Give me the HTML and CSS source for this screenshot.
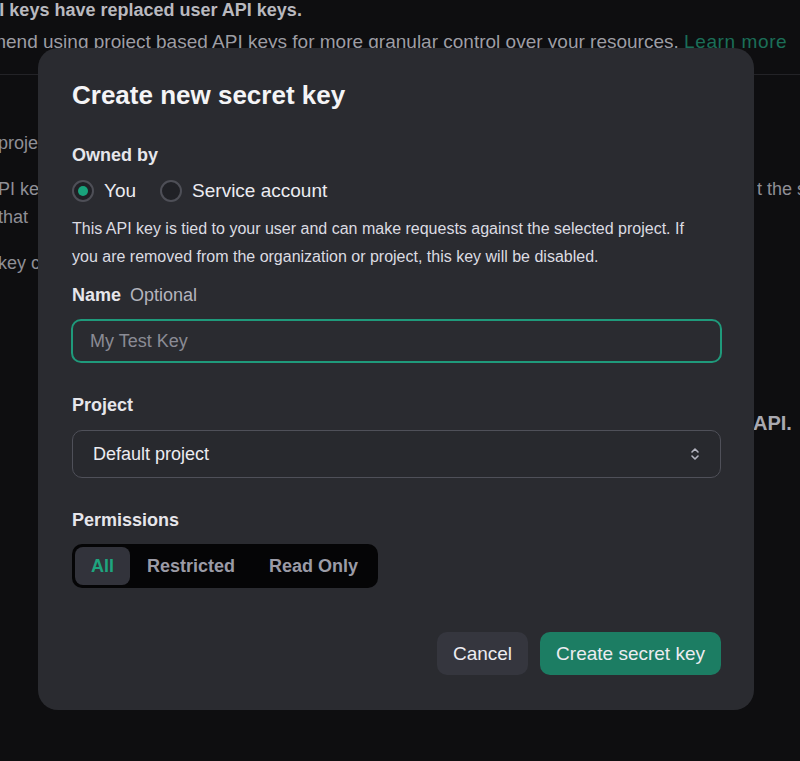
FILE: index.html
```html
<!DOCTYPE html>
<html lang="en">
<head>
    <meta charset="UTF-8">
    <meta name="viewport" content="width=device-width, initial-scale=1.0">
    <title>API keys</title>
    <link rel="stylesheet" href="styles.css">
</head>
<body>
    <div class="page">
        <div class="notice">
            <p class="notice-title">Project API keys have replaced user API keys.</p>
            <p class="notice-text">We recommend using project based API keys for more granular control over your resources. <a href="#">Learn more</a></p>
        </div>
        <hr class="rule">

        <div class="page-body">
            <div class="bg-row first">
                <span>project, you can view and manage all API keys in this project.</span>
                <span></span>
            </div>
            <div class="bg-row para">
                <span>PI key with others, or expose it in the browser or other client-side code. In order to protec</span>
                <span>t the security of your account</span>
            </div>
            <div class="bg-row">
                <span>that</span>
                <span></span>
            </div>
            <div class="bg-row para">
                <span>key can be viewed on the usage page.</span>
                <span></span>
            </div>
            <div class="bg-row heading">
                <span></span>
                <span class="api">API.</span>
            </div>
        </div>
    </div>

    <div class="modal">
        <h1 class="modal-title">Create new secret key</h1>

        <div class="field">
            <div class="label">Owned by</div>
            <div class="radios">
                <label class="radio checked"><span class="dot"></span>You</label>
                <label class="radio"><span class="dot"></span>Service account</label>
            </div>
            <p class="hint">This API key is tied to your user and can make requests against the selected project. If you are removed from the organization or project, this key will be disabled.</p>
        </div>

        <div class="field">
            <div class="label">Name <span class="optional">Optional</span></div>
            <input class="text-input" type="text" placeholder="My Test Key">
        </div>

        <div class="field spaced">
            <div class="label">Project</div>
            <div class="select">
                <span>Default project</span>
                <svg width="10" height="16" viewBox="0 0 10 16" fill="none" stroke="#b4b4c0" stroke-width="1.6" stroke-linecap="round" stroke-linejoin="round">
                    <path d="M2 6 L5 3 L8 6"/>
                    <path d="M2 10 L5 13 L8 10"/>
                </svg>
            </div>
        </div>

        <div class="field spaced">
            <div class="label">Permissions</div>
            <div class="segmented">
                <span class="seg active">All</span>
                <span class="seg">Restricted</span>
                <span class="seg">Read Only</span>
            </div>
        </div>

        <div class="actions">
            <button class="btn btn-cancel">Cancel</button>
            <button class="btn btn-primary">Create secret key</button>
        </div>
    </div>
</body>
</html>
```

FILE: styles.css
```css
html, body {
    margin: 0;
    height: 100%;
}

body {
    background: #0e0e10;
    font-family: "Liberation Sans", Arial, sans-serif;
    color: #ececf1;
    overflow: hidden;
}

.page {
    width: 800px;
}

.notice {
    margin-top: -2px;
    white-space: nowrap;
}

.notice p {
    margin: 0;
    line-height: 24px;
}

.notice-title {
    margin-left: -91px !important;
    font-size: 18px;
    font-weight: bold;
    color: #b9b9bf;
}

.notice-text {
    margin: 8px 0 0 -96px !important;
    font-size: 19px;
    color: #9d9da4;
}

.notice-text a {
    color: #1b6e58;
    letter-spacing: 0.6px;
    text-decoration: none;
}

.rule {
    border: none;
    border-top: 1px solid #232327;
    margin: 20px 0 0;
}

.page-body {
    margin-top: 54px;
    font-size: 18px;
    line-height: 28px;
    color: #8f8f96;
}

.bg-row {
    display: grid;
    grid-template-columns: 757px 1fr;
}

.bg-row span {
    white-space: nowrap;
    overflow: hidden;
}

.bg-row span:first-child {
    margin-left: -2px;
}

.bg-row.para {
    margin-top: 18px;
}

.bg-row.heading {
    margin-top: 132px;
}

.api {
    margin-left: -4px;
    font-weight: bold;
    font-size: 20px;
    color: #a9a9b0;
}

/* modal */

.modal {
    position: absolute;
    left: 38px;
    top: 48px;
    width: 716px;
    height: 662px;
    box-sizing: border-box;
    padding: 31px 33px 0 34px;
    background: #2a2b30;
    border-radius: 20px;
}

.modal-title {
    margin: 0;
    font-size: 26px;
    line-height: 32px;
    font-weight: bold;
    color: #f4f4f6;
}

.field {
    margin-top: 32px;
}

.field + .field {
    margin-top: 13px;
}

.field.spaced {
    margin-top: 30px;
}

.label {
    font-size: 18px;
    line-height: 24px;
    font-weight: bold;
    color: #e6e6eb;
}

.optional {
    margin-left: 4px;
    font-weight: normal;
    color: #b4b4bd;
}

.radios {
    display: flex;
    gap: 24px;
    margin-top: 12px;
}

.radio {
    display: flex;
    align-items: center;
    gap: 10px;
    font-size: 19px;
    line-height: 24px;
    color: #ececf1;
}

.dot {
    width: 18px;
    height: 18px;
    border: 2px solid #4e4f57;
    border-radius: 50%;
    background: #202126;
    display: flex;
    align-items: center;
    justify-content: center;
}

.radio.checked .dot::after {
    content: "";
    width: 10px;
    height: 10px;
    border-radius: 50%;
    background: #19a37c;
}

.hint {
    max-width: 630px;
    margin: 12px 0 0;
    font-size: 16px;
    line-height: 27.5px;
    color: #dcdce2;
}

.text-input {
    display: block;
    box-sizing: border-box;
    width: 651px;
    height: 44px;
    margin: 12px 0 0 -1px;
    padding: 0 17px;
    background: #2a2b30;
    border: 2px solid #1f9a7b;
    border-radius: 10px;
    font-family: inherit;
    font-size: 18px;
    color: #ececf1;
    outline: none;
}

.text-input::placeholder {
    color: #8b8b95;
}

.select {
    box-sizing: border-box;
    width: 649px;
    height: 48px;
    margin-top: 13px;
    padding: 0 20px;
    display: flex;
    align-items: center;
    justify-content: space-between;
    border: 1px solid #4f5059;
    border-radius: 10px;
    background: #28292e;
    font-size: 18px;
}

.segmented {
    display: inline-flex;
    margin-top: 12px;
    padding: 3px;
    background: #050506;
    border-radius: 10px;
}

.seg {
    padding: 0 17px;
    height: 38px;
    display: flex;
    align-items: center;
    font-size: 18px;
    font-weight: bold;
    color: #9b9ba6;
    border-radius: 8px;
}

.seg.active {
    padding: 0 16px;
    background: #32333b;
    color: #1ea57f;
}

.actions {
    display: flex;
    justify-content: flex-end;
    gap: 12px;
    margin-top: 44px;
}

.btn {
    height: 43px;
    padding: 0 16px;
    border: none;
    border-radius: 10px;
    font-family: inherit;
    font-size: 19px;
    color: #ececf1;
    cursor: pointer;
}

.btn-cancel {
    background: #35363e;
}

.btn-primary {
    background: #1c7d63;
}
```
